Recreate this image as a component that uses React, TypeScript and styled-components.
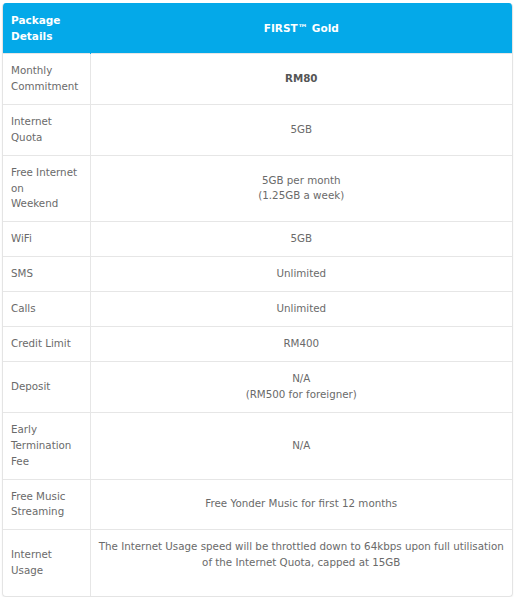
import React from 'react';
import styled, { createGlobalStyle } from 'styled-components';

const GlobalStyle = createGlobalStyle`
    body {
        margin: 0;
        background: #ffffff;
        font-family: "DejaVu Sans", Verdana, sans-serif;
    }
`
const Page = styled.div`
    padding: 3px 3px 0 2px;
`
const Card = styled.div`
    border: 1px solid #e4e4e4;
    border-top: none;
    border-radius: 4px;
    overflow: hidden;
    box-shadow: 0 1px 2px rgba(0, 0, 0, 0.06);
`
const Table = styled.table`
    width: 100%;
    border-collapse: collapse;
    table-layout: fixed;
    font-size: 10.3px;
    line-height: 15.9px;
    color: #6a6a6a;
`
const HeadCell = styled.th<{ $center?: boolean }>`
    background-color: #04a9e9;
    color: #ffffff;
    font-size: 10.5px;
    line-height: 16px;
    font-weight: bold;
    text-align: ${p => (p.$center ? 'center' : 'left')};
    padding: 9px 8px;
    vertical-align: middle;
    border-left: ${p => (p.$center ? '1px solid #04a9e9' : 'none')};
`
const LabelCell = styled.td`
    padding: 9px 4px 9px 8px;
    vertical-align: middle;
    border-top: 1px solid #e6e6e6;
`
const ValueCell = styled.td<{ $bold?: boolean }>`
    padding: 9px 2px;
    text-align: center;
    vertical-align: middle;
    border-top: 1px solid #e6e6e6;
    border-left: 1px solid #e6e6e6;
    font-weight: ${p => (p.$bold ? 'bold' : 'normal')};
    color: ${p => (p.$bold ? '#555555' : '#6a6a6a')};
`
const Line = styled.span`
    white-space: nowrap;
`

type Row = { label: React.ReactNode; value: React.ReactNode; bold?: boolean };

const rows: Row[] = [
    { label: <>Monthly<br />Commitment</>, value: 'RM80', bold: true },
    { label: <>Internet<br />Quota</>, value: '5GB' },
    { label: <>Free Internet<br />on<br />Weekend</>, value: <>5GB per month<br />(1.25GB a week)</> },
    { label: 'WiFi', value: '5GB' },
    { label: 'SMS', value: 'Unlimited' },
    { label: 'Calls', value: 'Unlimited' },
    { label: 'Credit Limit', value: 'RM400' },
    { label: 'Deposit', value: <>N/A<br />(RM500 for foreigner)</> },
    { label: <>Early<br />Termination<br />Fee</>, value: 'N/A' },
    { label: <>Free Music<br />Streaming</>, value: 'Free Yonder Music for first 12 months' },
    {
        label: <>Internet<br />Usage</>,
        value: (
            <>
                <Line>The Internet Usage speed will be throttled down to 64kbps upon full utilisation</Line>
                <br />of the Internet Quota, capped at 15GB<br />&nbsp;
            </>
        ),
    },
];

const App: React.FC = () => {
    return (
        <Page>
            <GlobalStyle />
            <Card>
                <Table>
                    <colgroup>
                        <col style={{ width: 87 }} />
                        <col />
                    </colgroup>
                    <thead>
                        <tr>
                            <HeadCell>Package Details</HeadCell>
                            <HeadCell $center>FIRST™ Gold</HeadCell>
                        </tr>
                    </thead>
                    <tbody>
                        {rows.map((r, i) => (
                            <tr key={i}>
                                <LabelCell>{r.label}</LabelCell>
                                <ValueCell $bold={r.bold}>{r.value}</ValueCell>
                            </tr>
                        ))}
                    </tbody>
                </Table>
            </Card>
        </Page>
    );
}

export default App;
